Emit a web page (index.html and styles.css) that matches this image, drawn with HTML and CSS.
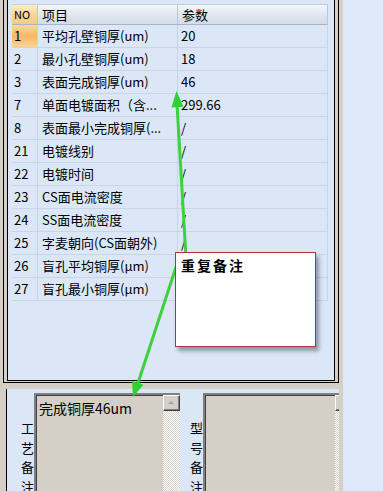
FILE: index.html
```html
<!DOCTYPE html>
<html lang="zh-CN">
<head>
    <meta charset="UTF-8">
    <meta name="viewport" content="width=device-width, initial-scale=1.0">
    <title>工艺参数</title>
    <link rel="stylesheet" href="styles.css">
</head>
<body>
    <div class="screen">
        <div class="window">
            <!-- parameter grid -->
            <div class="grid-outer">
                <div class="grid-inner">
                    <table class="params">
                        <thead>
                            <tr>
                                <th class="col-no">NO</th>
                                <th class="col-item">项目</th>
                                <th class="col-val">参数</th>
                            </tr>
                        </thead>
                        <tbody>
                            <tr class="current"><td class="no">1</td><td>平均孔壁铜厚(um)</td><td>20</td></tr>
                            <tr><td class="no">2</td><td>最小孔壁铜厚(um)</td><td>18</td></tr>
                            <tr><td class="no">3</td><td>表面完成铜厚(um)</td><td>46</td></tr>
                            <tr><td class="no">7</td><td>单面电镀面积（含...</td><td>299.66</td></tr>
                            <tr><td class="no">8</td><td>表面最小完成铜厚(...</td><td>/</td></tr>
                            <tr><td class="no">21</td><td>电镀线别</td><td>/</td></tr>
                            <tr><td class="no">22</td><td>电镀时间</td><td>/</td></tr>
                            <tr><td class="no">23</td><td>CS面电流密度</td><td>/</td></tr>
                            <tr><td class="no">24</td><td>SS面电流密度</td><td>/</td></tr>
                            <tr><td class="no">25</td><td>字麦朝向(CS面朝外)</td><td>/</td></tr>
                            <!-- values of these two rows sit under the note -->
                            <tr><td class="no">26</td><td>盲孔平均铜厚(μm)</td><td></td></tr>
                            <tr><td class="no">27</td><td>盲孔最小铜厚(μm)</td><td></td></tr>
                        </tbody>
                    </table>
                </div>
            </div>

            <!-- remarks -->
            <div class="notes">
                <div class="notes-label label-process">工艺备注</div>
                <div class="memo memo-process">
                    <div class="memo-text">完成铜厚46um</div>
                    <div class="scrollbar"><span class="scroll-up"></span></div>
                </div>
                <div class="notes-label label-model">型号备注</div>
                <div class="memo memo-model">
                    <div class="memo-text"></div>
                    <div class="scrollbar"><span class="scroll-up"></span></div>
                </div>
            </div>
        </div>
        <div class="side"></div>

        <svg class="arrows" width="383" height="491" viewBox="0 0 383 491">
            <line x1="186" y1="258" x2="177" y2="104" />
            <polygon points="176.5,91 171.4,107.5 183.4,106.8" />
            <line x1="179" y1="258" x2="137" y2="386" />
            <polygon points="133,397 132,380.9 143.4,384.7" />
        </svg>

        <div class="callout">重复备注</div>
    </div>
</body>
</html>
```

FILE: styles.css
```css
* {
    margin: 0;
    padding: 0;
    box-sizing: border-box;
}

body {
    font-family: "Noto Sans CJK SC", sans-serif;
    font-size: 13px;
    color: #000;
    background-color: #dce8f8;
}

.screen {
    position: relative;
    width: 383px;
    height: 491px;
    overflow: hidden;
    display: flex;
}

.window {
    width: 343px;
    height: 491px;
    background-color: #d4d0c8;
    display: flex;
    flex-direction: column;
}

.side {
    flex: 1;
    background-color: #dde9f9;
}

/* grid frame: two black rules with grey between */
.grid-outer {
    height: 383px;
    margin: 0 4px 6px 3px;
    border: 1px solid #000;
    border-top: none;
    padding: 0 3px 1px 3px;
}

.grid-inner {
    height: 100%;
    border: 1px solid #000;
    border-top: none;
    background-color: #dbe7f7;
    padding: 4px 0 0 4px;
}

.params {
    border-collapse: separate;
    border-spacing: 0;
    table-layout: fixed;
    width: 316px;
}

.params th {
    height: 21px;
    line-height: 19px;
    font-weight: normal;
    text-align: left;
    background: linear-gradient(to bottom, #f4f7fb, #dfe6ef 55%, #d3dce8);
    border-top: 1px solid #c3cedb;
    border-bottom: 1px solid #a6b5c8;
    border-right: 1px solid #bac7d7;
    white-space: nowrap;
}

.params .col-no {
    width: 26px;
    padding-left: 2px;
    font-size: 11px;
    background: linear-gradient(to bottom, #fcecca, #f8d594 55%, #f6cb82);
}

.params .col-item {
    width: 140px;
    padding-left: 4px;
}

.params .col-val {
    width: 150px;
    padding-left: 4px;
}

.params td {
    height: 23px;
    line-height: 22px;
    border-bottom: 1px solid #c7d5e7;
    border-right: 1px solid #c7d5e7;
    white-space: nowrap;
    overflow: hidden;
    padding-left: 4px;
}

.params td.no {
    padding-left: 2px;
}

.params td:last-child {
    padding-left: 3px;
}

.params tr.current td.no {
    background: linear-gradient(to bottom, #fbd8a4, #f7b766 50%, #fbd29a);
}

/* remarks panel */
.notes {
    flex: 1;
    margin: 0 4px 0 6px;
    border-left: 1px solid #000;
    background-color: #dbe7f7;
    display: flex;
    align-items: flex-start;
    padding-top: 4px;
    overflow: hidden;
}

.notes-label {
    flex-shrink: 0;
    writing-mode: vertical-rl;
    white-space: nowrap;
    letter-spacing: 6.5px;
    line-height: 13px;
    font-size: 13px;
    padding-top: 29px;
}

.label-process {
    width: 27px;
    padding-left: 7px;
}

.label-model {
    width: 23px;
    padding-left: 5px;
}

.memo {
    position: relative;
    flex-shrink: 0;
    height: 110px;
    background-color: #d4d0c8;
    border-top: 2px solid #808080;
    border-left: 2px solid #808080;
    box-shadow: inset 1px 1px 0 #404040;
    display: flex;
}

.memo-process {
    width: 146px;
}

.memo-model {
    width: 149px;
}

.memo-text {
    flex: 1;
    font-size: 14px;
    line-height: 20px;
    padding: 3px 0 0 3px;
}

.scrollbar {
    width: 17px;
    background: repeating-conic-gradient(#ffffff 0 25%, #d4d0c8 0 50%) 0 0 / 2px 2px;
}

.scroll-up {
    display: block;
    height: 16px;
    background-color: #d4d0c8;
    border-top: 1px solid #fff;
    border-left: 1px solid #fff;
    border-right: 1px solid #404040;
    border-bottom: 1px solid #404040;
    box-shadow: inset -1px -1px 0 #808080;
    position: relative;
}

.scroll-up::after {
    content: "";
    position: absolute;
    left: 4px;
    top: 5px;
    border-left: 3px solid transparent;
    border-right: 3px solid transparent;
    border-bottom: 3px solid #a0a0a0;
}

/* green connectors and the note over the grid */
.arrows {
    position: absolute;
    left: 0;
    top: 0;
    z-index: 1;
    pointer-events: none;
}

.arrows line {
    stroke: #3cd23c;
    stroke-width: 3;
}

.arrows polygon {
    fill: #2fd12f;
}

.callout {
    position: absolute;
    left: 175px;
    top: 252px;
    width: 141px;
    height: 95px;
    z-index: 2;
    background-color: #fff;
    border: 1px solid #b0303c;
    box-shadow: 3px 4px 4px rgba(0, 0, 0, 0.35);
    font-size: 14px;
    font-weight: bold;
    letter-spacing: 2px;
    line-height: 20px;
    padding: 2px 5px;
}
```
